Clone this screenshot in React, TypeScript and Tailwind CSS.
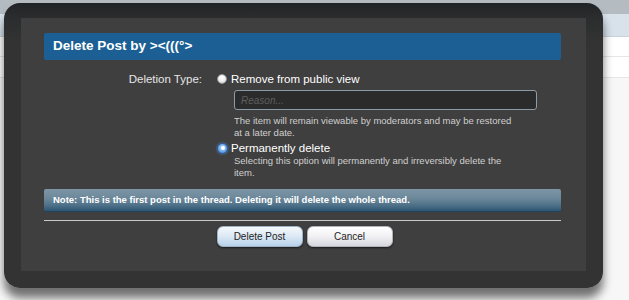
import React from "react";

const font = { fontFamily: '"Liberation Sans", Arial, sans-serif' };

function Radio({ checked }: { checked?: boolean }) {
  if (checked) {
    return (
      <span className="flex h-[11px] w-[11px] shrink-0 items-center justify-center rounded-full border border-[#2a5ea8] bg-[radial-gradient(circle_at_50%_40%,#bfe0ff_0%,#6aa4e6_60%,#2f6fc4_100%)] shadow-[0_0_2px_rgba(120,170,255,0.8)]">
        <span className="h-[4px] w-[4px] rounded-full bg-white" />
      </span>
    );
  }
  return (
    <span className="h-[10px] w-[10px] shrink-0 rounded-full border border-[#9a9a9a] bg-[radial-gradient(circle_at_50%_35%,#ffffff_0%,#ececec_55%,#bdbdbd_100%)]" />
  );
}

export default function App() {
  return (
    <div className="relative h-[300px] w-[629px] overflow-hidden bg-[#f4f5f6]" style={font}>
      {/* underlying page */}
      <div className="flex h-full flex-col">
        <div className="h-[14px] bg-[#b4bbc1]" />
        <div className="h-[23px] border-b border-[#c9d3dc] bg-[#d7e2eb]" />
        <div className="h-[20px] border-b border-[#e4e6e8] bg-white" />
        <div className="h-[21px] border-b border-[#e4e6e8] bg-white" />
        <div className="flex-1 bg-[#f7f7f7]" />
      </div>

      {/* dialog */}
      <div className="absolute left-[4px] top-[3px] flex h-[285px] w-[599px] rounded-[16px] bg-[linear-gradient(to_bottom,#222527_0px,#2b2d2e_16px,#333333_40px,#333333_100%)] px-[17px] pb-[17px] pt-[15px] shadow-[0_10px_10px_rgba(0,0,0,0.55)]">
        <div className="flex w-full flex-col bg-[#3f3f3f] pl-[23px] pr-[25px] pt-[15px]">
          <div className="flex h-[27px] items-center rounded-[2px] bg-[#1c5f94] pl-[9px] text-[13.5px] font-bold text-white">
            Delete Post by &gt;&lt;(((°&gt;
          </div>

          <div className="mt-[12px] flex">
            <div className="w-[159px] shrink-0 pr-[1px] text-right text-[11.5px] leading-[14px] text-[#e6e6e6]">
              Deletion Type:
            </div>
            <div className="ml-[14px] flex flex-col">
              <div className="flex items-center gap-[4px] text-[11.5px] leading-[14px] text-white">
                <Radio />
                <span>Remove from public view</span>
              </div>
              <div className="ml-[17px] mt-[4px] flex h-[20px] w-[303px] items-center rounded-[3px] border border-[#8d9ba6] bg-[#2b2b2b] px-[6px] text-[10px] italic text-[#5f5f5f]">
                Reason...
              </div>
              <p className="ml-[17px] mt-[5px] w-[282px] text-[9.5px] leading-[11.5px] text-[#cfcfcf]">
                The item will remain viewable by moderators and may be restored at a later date.
              </p>
              <div className="mt-[3px] flex items-center gap-[3px] text-[11.5px] leading-[14px] text-white">
                <Radio checked />
                <span>Permanently delete</span>
              </div>
              <p className="ml-[17px] w-[282px] text-[9.5px] leading-[11.5px] text-[#cfcfcf]">
                Selecting this option will permanently and irreversibly delete the item.
              </p>
            </div>
          </div>

          <div className="mt-[11px] flex h-[23px] items-center rounded-[2px] border-b border-[#21445c] bg-[linear-gradient(to_bottom,#7d95a6_0%,#6a8799_45%,#4d7088_75%,#2c5572_100%)] pl-[9px] text-[9.5px] font-bold text-white">
            Note: This is the first post in the thread. Deleting it will delete the whole thread.
          </div>

          <div className="mt-[8px] h-px bg-[#c9c9c9]" />

          <div className="mt-[5px] flex justify-center gap-[4px] pl-[4px]">
            <button className="h-[21px] w-[86px] rounded-[6px] border border-[#9fb3c6] bg-[linear-gradient(to_bottom,#f6f9fc_0%,#dbe8f4_50%,#b6d1ea_100%)] text-[10px] text-[#1e1e1e] shadow-[0_1px_2px_rgba(0,0,0,0.6)]">
              Delete Post
            </button>
            <button className="h-[21px] w-[86px] rounded-[6px] border border-[#b4b4bc] bg-[linear-gradient(to_bottom,#ffffff_0%,#f1f1f4_50%,#d6d6de_100%)] text-[10px] text-[#1e1e1e] shadow-[0_1px_2px_rgba(0,0,0,0.6)]">
              Cancel
            </button>
          </div>
        </div>
      </div>
    </div>
  );
}
